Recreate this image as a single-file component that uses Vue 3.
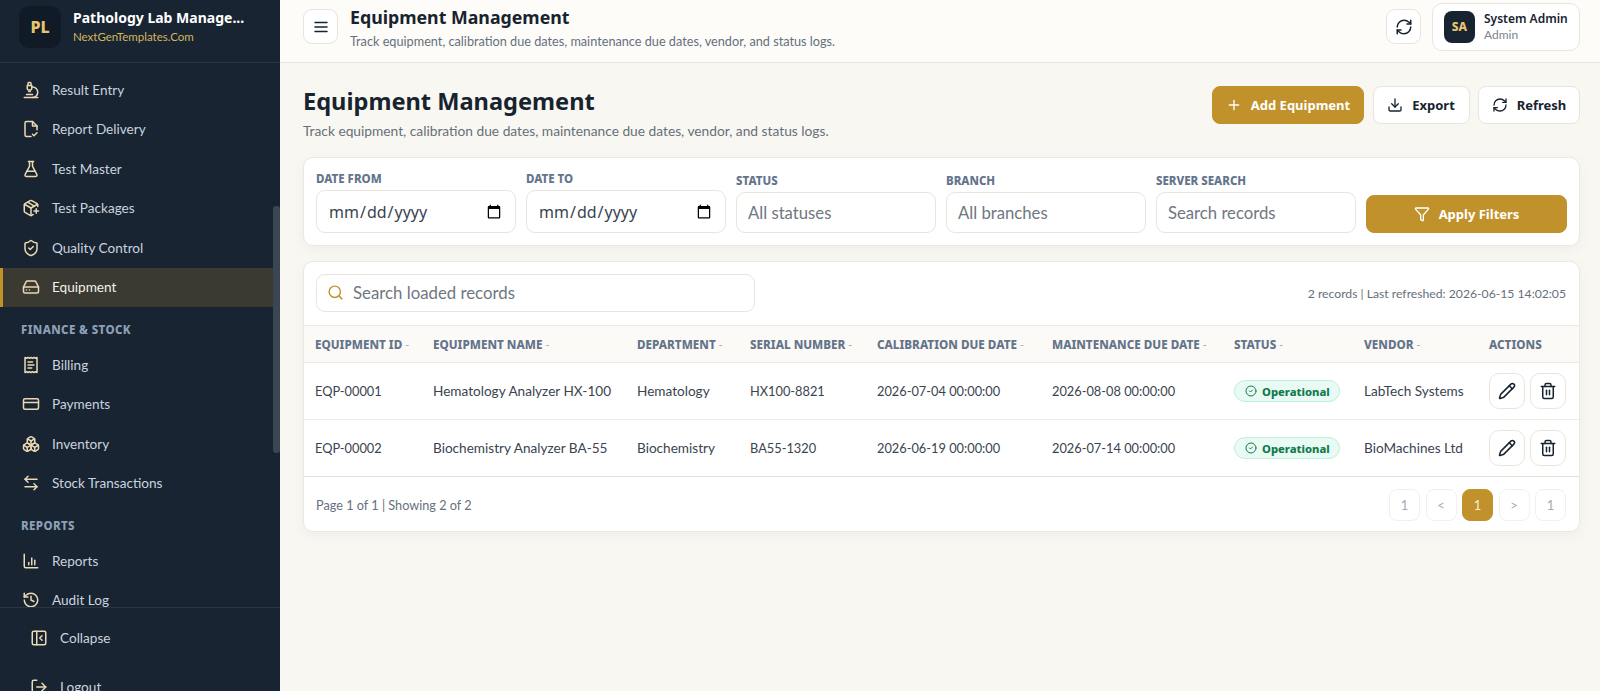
<script setup>
import { h } from 'vue'

const paths = {
  microscope: ['M6 18h8', 'M3 22h18', 'M14 22a7 7 0 1 0 0-14h-1', 'M9 14h2', 'M9 12a2 2 0 0 1-2-2V6h6v4a2 2 0 0 1-2 2Z', 'M12 6V3a1 1 0 0 0-1-1H9a1 1 0 0 0-1 1v3'],
  fileCheck: ['M12 22H6a2 2 0 0 1-2-2V4a2 2 0 0 1 2-2h8l6 6v5', 'M14 2v6h6', 'm14 19 2 2 4-4'],
  flask: ['M14 2v6a2 2 0 0 0 .245.96l5.51 10.08A2 2 0 0 1 18 22H6a2 2 0 0 1-1.755-2.96l5.51-10.08A2 2 0 0 0 10 8V2', 'M6.453 15h11.094', 'M8.5 2h7'],
  packagePlus: ['M16 16h6', 'M19 13v6', 'M21 10V8a2 2 0 0 0-1-1.73l-7-4a2 2 0 0 0-2 0l-7 4A2 2 0 0 0 3 8v8a2 2 0 0 0 1 1.73l7 4a2 2 0 0 0 2 0l2-1.14', 'm7.5 4.27 9 5.15', 'M3.29 7 12 12l8.71-5', 'M12 22V12'],
  shield: ['M20 13c0 5-3.5 7.5-7.66 8.95a1 1 0 0 1-.67-.01C7.5 20.5 4 18 4 13V6a1 1 0 0 1 1-1c2 0 4.5-1.2 6.24-2.72a1.17 1.17 0 0 1 1.52 0C14.51 3.81 17 5 19 5a1 1 0 0 1 1 1z', 'm9 12 2 2 4-4'],
  drive: ['M22 12H2', 'M5.45 5.11 2 12v6a2 2 0 0 0 2 2h16a2 2 0 0 0 2-2v-6l-3.45-6.89A2 2 0 0 0 16.76 4H7.24a2 2 0 0 0-1.79 1.11z', 'M6 16h.01', 'M10 16h.01'],
  receipt: ['M4 2v20l2-1 2 1 2-1 2 1 2-1 2 1 2-1 2 1V2l-2 1-2-1-2 1-2-1-2 1-2-1-2 1Z', 'M14 8H8', 'M16 12H8', 'M13 16H8'],
  card: ['M4 5h16a2 2 0 0 1 2 2v10a2 2 0 0 1-2 2H4a2 2 0 0 1-2-2V7a2 2 0 0 1 2-2Z', 'M2 10h20'],
  boxes: ['M2.97 12.92A2 2 0 0 0 2 14.63v3.24a2 2 0 0 0 .97 1.71l3 1.8a2 2 0 0 0 2.06 0L12 19v-5.5l-5-3-4.03 2.42Z', 'm7 16.5-4.74-2.85', 'm7 16.5 5-3', 'M7 16.5v5.17', 'M12 13.5V19l3.97 2.38a2 2 0 0 0 2.06 0l3-1.8a2 2 0 0 0 .97-1.71v-3.24a2 2 0 0 0-.97-1.71L17 10.5l-5 3Z', 'm17 16.5-5-3', 'm17 16.5 4.74-2.85', 'M17 16.5v5.17', 'M7.97 4.42A2 2 0 0 0 7 6.13v4.37l5 3 5-3V6.13a2 2 0 0 0-.97-1.71l-3-1.8a2 2 0 0 0-2.06 0l-3 1.8Z', 'M12 8 7.26 5.15', 'm12 8 4.74-2.85', 'M12 13.5V8'],
  transfer: ['M8 3 4 7l4 4', 'M4 7h16', 'm16 21 4-4-4-4', 'M20 17H4'],
  chart: ['M3 3v16a2 2 0 0 0 2 2h16', 'M9 17v-3', 'M13 17V8', 'M17 17v-6'],
  history: ['M3 12a9 9 0 1 0 9-9 9.75 9.75 0 0 0-6.74 2.74L3 8', 'M3 3v5h5', 'M12 7v5l4 2'],
  collapse: ['M5 3h14a2 2 0 0 1 2 2v14a2 2 0 0 1-2 2H5a2 2 0 0 1-2-2V5a2 2 0 0 1 2-2Z', 'M9 3v18', 'm16 15-3-3 3-3'],
  logout: ['M9 21H5a2 2 0 0 1-2-2V5a2 2 0 0 1 2-2h4', 'm16 17 5-5-5-5', 'M21 12H9'],
  menu: ['M4 6h16', 'M4 12h16', 'M4 18h16'],
  refresh: ['M3 12a9 9 0 0 1 9-9 9.75 9.75 0 0 1 6.74 2.74L21 8', 'M21 3v5h-5', 'M21 12a9 9 0 0 1-9 9 9.75 9.75 0 0 1-6.74-2.74L3 16', 'M8 16H3v5'],
  plus: ['M5 12h14', 'M12 5v14'],
  download: ['M12 15V3', 'M21 15v4a2 2 0 0 1-2 2H5a2 2 0 0 1-2-2v-4', 'm7 10 5 5 5-5'],
  funnel: ['M10 20a1 1 0 0 0 .553.895l2 1A1 1 0 0 0 14 21v-7a2 2 0 0 1 .517-1.341L21.74 4.67A1 1 0 0 0 21 3H3a1 1 0 0 0-.742 1.67l7.225 7.989A2 2 0 0 1 10 14z'],
  search: ['M19 11a8 8 0 1 1-16 0 8 8 0 0 1 16 0Z', 'm21 21-4.3-4.3'],
  check: ['M22 12a10 10 0 1 1-20 0 10 10 0 0 1 20 0Z', 'm9 12 2 2 4-4'],
  pencil: ['M21.174 6.812a1 1 0 0 0-3.986-3.987L3.842 16.174a2 2 0 0 0-.5.83l-1.321 4.352a.5.5 0 0 0 .623.622l4.353-1.32a2 2 0 0 0 .83-.497z', 'm15 5 4 4'],
  trash: ['M3 6h18', 'M19 6v14c0 1-1 2-2 2H7c-1 0-2-1-2-2V6', 'M8 6V4c0-1 1-2 2-2h4c1 0 2 1 2 2v2', 'M10 11v6', 'M14 11v6'],
}

const Icon = (props) =>
  h(
    'svg',
    {
      width: props.size,
      height: props.size,
      viewBox: '0 0 24 24',
      fill: 'none',
      stroke: 'currentColor',
      'stroke-width': 2,
      'stroke-linecap': 'round',
      'stroke-linejoin': 'round',
      style: { flex: 'none', display: 'block' },
    },
    paths[props.name].map((d) => h('path', { d })),
  )
Icon.props = { name: String, size: { type: Number, default: 18 } }

const navGroups = [
  {
    items: [
      { label: 'Result Entry', icon: 'microscope' },
      { label: 'Report Delivery', icon: 'fileCheck' },
      { label: 'Test Master', icon: 'flask' },
      { label: 'Test Packages', icon: 'packagePlus' },
      { label: 'Quality Control', icon: 'shield' },
      { label: 'Equipment', icon: 'drive', active: true },
    ],
  },
  {
    title: 'FINANCE & STOCK',
    items: [
      { label: 'Billing', icon: 'receipt' },
      { label: 'Payments', icon: 'card' },
      { label: 'Inventory', icon: 'boxes' },
      { label: 'Stock Transactions', icon: 'transfer' },
    ],
  },
  {
    title: 'REPORTS',
    items: [
      { label: 'Reports', icon: 'chart' },
      { label: 'Audit Log', icon: 'history' },
    ],
  },
]

const columns = [
  { label: 'EQUIPMENT ID', width: 118 },
  { label: 'EQUIPMENT NAME', width: 204 },
  { label: 'DEPARTMENT', width: 113 },
  { label: 'SERIAL NUMBER', width: 127 },
  { label: 'CALIBRATION DUE DATE', width: 175 },
  { label: 'MAINTENANCE DUE DATE', width: 182 },
  { label: 'STATUS', width: 130 },
  { label: 'VENDOR', width: 125 },
  { label: 'ACTIONS', width: 101, plain: true },
]

const numericCols = [0, 3, 4, 5]

const rows = [
  ['EQP-00001', 'Hematology Analyzer HX-100', 'Hematology', 'HX100-8821', '2026-07-04 00:00:00', '2026-08-08 00:00:00', 'LabTech Systems'],
  ['EQP-00002', 'Biochemistry Analyzer BA-55', 'Biochemistry', 'BA55-1320', '2026-06-19 00:00:00', '2026-07-14 00:00:00', 'BioMachines Ltd'],
]

const pages = [
  { label: '1' },
  { label: '<' },
  { label: '1', active: true },
  { label: '>' },
  { label: '1' },
]
</script>

<template>
  <div class="shell">
    <aside class="sidebar">
      <div class="brand">
        <div class="brand-logo">PL</div>
        <div class="brand-text">
          <div class="brand-name">Pathology Lab Manage...</div>
          <div class="brand-site">NextGenTemplates.Com</div>
        </div>
      </div>

      <div class="nav-wrap">
        <nav class="nav">
          <div v-for="(group, i) in navGroups" :key="i" class="nav-group">
            <div v-if="group.title" class="nav-title">{{ group.title }}</div>
            <a v-for="item in group.items" :key="item.label" class="nav-item" :class="{ active: item.active }">
              <Icon :name="item.icon" :size="18" />
              <span>{{ item.label }}</span>
            </a>
          </div>
        </nav>
        <div class="rail"><div class="thumb"></div></div>
      </div>

      <div class="side-foot">
        <a class="foot-item"><Icon name="collapse" :size="18" /><span>Collapse</span></a>
        <a class="foot-item"><Icon name="logout" :size="18" /><span>Logout</span></a>
      </div>
    </aside>

    <div class="main">
      <header class="topbar">
        <button class="icon-btn menu-btn"><Icon name="menu" :size="18" /></button>
        <div class="top-heading">
          <div class="top-title">Equipment Management</div>
          <div class="top-sub">Track equipment, calibration due dates, maintenance due dates, vendor, and status logs.</div>
        </div>
        <button class="icon-btn refresh-btn"><Icon name="refresh" :size="18" /></button>
        <div class="user">
          <div class="avatar">SA</div>
          <div>
            <div class="user-name">System Admin</div>
            <div class="user-role">Admin</div>
          </div>
        </div>
      </header>

      <main class="content">
        <div class="page-head">
          <div>
            <h1>Equipment Management</h1>
            <p>Track equipment, calibration due dates, maintenance due dates, vendor, and status logs.</p>
          </div>
          <div class="page-actions">
            <button class="btn gold add"><Icon name="plus" :size="16" />Add Equipment</button>
            <button class="btn export"><Icon name="download" :size="16" />Export</button>
            <button class="btn refresh"><Icon name="refresh" :size="16" />Refresh</button>
          </div>
        </div>

        <section class="card filters">
          <label class="field">
            <span>DATE FROM</span>
            <input class="control date" type="date" />
          </label>
          <label class="field">
            <span>DATE TO</span>
            <input class="control date" type="date" />
          </label>
          <label class="field">
            <span>STATUS</span>
            <input class="control" placeholder="All statuses" />
          </label>
          <label class="field">
            <span>BRANCH</span>
            <input class="control" placeholder="All branches" />
          </label>
          <label class="field">
            <span>SERVER SEARCH</span>
            <input class="control" placeholder="Search records" />
          </label>
          <button class="btn gold apply"><Icon name="funnel" :size="16" />Apply Filters</button>
        </section>

        <section class="card records">
          <div class="records-top">
            <div class="local-search">
              <Icon name="search" :size="17" />
              <input placeholder="Search loaded records" />
            </div>
            <div class="records-meta">2 records | Last refreshed: 2026-06-15 14:02:05</div>
          </div>

          <table>
            <colgroup>
              <col v-for="col in columns" :key="col.label" :style="{ width: col.width + 'px' }" />
            </colgroup>
            <thead>
              <tr>
                <th v-for="col in columns" :key="col.label">
                  {{ col.label }}<span v-if="!col.plain" class="sort"> -</span>
                </th>
              </tr>
            </thead>
            <tbody>
              <tr v-for="row in rows" :key="row[0]">
                <td v-for="n in 6" :key="n" :class="{ numeric: numericCols.includes(n - 1) }">{{ row[n - 1] }}</td>
                <td>
                  <span class="badge"><Icon name="check" :size="12" />Operational</span>
                </td>
                <td>{{ row[6] }}</td>
                <td>
                  <div class="row-actions">
                    <button class="act"><Icon name="pencil" :size="18" /></button>
                    <button class="act"><Icon name="trash" :size="18" /></button>
                  </div>
                </td>
              </tr>
            </tbody>
          </table>

          <div class="records-foot">
            <span>Page 1 of 1 | Showing 2 of 2</span>
            <div class="pager">
              <button v-for="(p, i) in pages" :key="i" class="page" :class="{ active: p.active }">{{ p.label }}</button>
            </div>
          </div>
        </section>
      </main>
    </div>
  </div>
</template>

<style>
html,
body {
  margin: 0;
  height: 100%;
  overflow: hidden;
}
</style>

<style scoped>
.shell {
  --heavy: 'Noto Sans', 'Liberation Sans', sans-serif;
  display: flex;
  height: 100vh;
  overflow: hidden;
  font-family: Lato, 'Noto Sans', sans-serif;
  color: #17232f;
  background: #f9f7f1;
}

.sidebar {
  width: 280px;
  flex: none;
  display: flex;
  flex-direction: column;
  background: #182431;
  color: #c9d3df;
  overflow: hidden;
}

.brand {
  height: 63px;
  flex: none;
  box-sizing: border-box;
  display: flex;
  align-items: center;
  gap: 12px;
  padding: 0 0 9px 19px;
  border-bottom: 1px solid #2a3643;
}

.brand-logo {
  width: 42px;
  height: 42px;
  border-radius: 10px;
  background: #101b27;
  color: #e6c66f;
  display: flex;
  align-items: center;
  justify-content: center;
  font-family: var(--heavy);
  font-weight: 800;
  font-size: 16px;
}

.brand-name {
  color: #fff;
  font-family: var(--heavy);
  font-weight: 700;
  font-size: 14px;
  line-height: 20px;
  white-space: nowrap;
}

.brand-site {
  color: #d4b65f;
  font-size: 11.5px;
  line-height: 17px;
}

.nav-wrap {
  height: 544px;
  flex: none;
  display: flex;
  overflow: hidden;
}

.nav {
  width: 273px;
  flex: none;
  padding-top: 7px;
}

.nav-title {
  padding: 0 21px;
  margin: 15px 0 7px;
  height: 16px;
  line-height: 16px;
  font-family: var(--heavy);
  font-size: 11.5px;
  font-weight: 800;
  letter-spacing: 0.4px;
  color: #8da0b6;
}

.nav-item {
  height: 39.5px;
  box-sizing: border-box;
  display: flex;
  align-items: center;
  gap: 12px;
  padding-left: 22px;
  font-size: 13.6px;
}

.nav-item svg {
  color: #ead9b2;
}

.nav-item.active {
  background: #3a3a33;
  color: #f4f1e8;
  box-shadow: inset 3px 0 0 #c1922b;
}

.rail {
  flex: 1;
}

.thumb {
  margin-top: 143px;
  height: 247px;
  background: #3b4653;
  border-radius: 3px;
}

.side-foot {
  flex: none;
  border-top: 1px solid #2a3643;
  padding-top: 20px;
}

.foot-item {
  height: 20px;
  display: flex;
  align-items: center;
  gap: 12px;
  padding-left: 30px;
  font-size: 13.6px;
}

.foot-item svg {
  color: #ead9b2;
}

.foot-item:first-child {
  margin-bottom: 29px;
}

.main {
  flex: 1;
  min-width: 0;
  display: flex;
  flex-direction: column;
}

.topbar {
  height: 63px;
  flex: none;
  box-sizing: border-box;
  display: flex;
  align-items: center;
  padding: 0 20px 9px 23px;
  background: #fdfcf9;
  border-bottom: 1px solid #e8e5dc;
}

.icon-btn {
  width: 35px;
  height: 35px;
  padding: 0;
  display: flex;
  align-items: center;
  justify-content: center;
  border: 1px solid #e8e5dc;
  border-radius: 9px;
  background: #fff;
  color: #17232f;
}

.top-heading {
  flex: 1;
  margin-left: 12px;
}

.top-title {
  font-family: var(--heavy);
  font-size: 17.75px;
  font-weight: 700;
  line-height: 24px;
  margin-top: 1px;
}

.top-sub {
  font-size: 12.7px;
  line-height: 18px;
  margin-top: 3px;
  color: #66707c;
}

.user {
  width: 148px;
  height: 48px;
  box-sizing: border-box;
  margin-left: 11px;
  display: flex;
  align-items: center;
  gap: 9px;
  padding-left: 11px;
  border: 1px solid #e8e5dc;
  border-radius: 10px;
  background: #fff;
}

.avatar {
  width: 31px;
  height: 32px;
  border-radius: 8px;
  background: #172331;
  color: #e6c66f;
  display: flex;
  align-items: center;
  justify-content: center;
  font-family: var(--heavy);
  font-size: 12px;
  font-weight: 800;
}

.user-name {
  font-family: var(--heavy);
  font-size: 12px;
  font-weight: 600;
  line-height: 16px;
}

.user-role {
  font-size: 12px;
  line-height: 16px;
  color: #7b838c;
}

.content {
  flex: 1;
  padding: 23px 20px 0 23px;
}

.page-head {
  display: flex;
  justify-content: space-between;
  align-items: flex-start;
}

h1 {
  margin: 0;
  font-family: var(--heavy);
  font-size: 23.6px;
  line-height: 30px;
  font-weight: 700;
}

.page-head p {
  margin: 5px 0 0;
  font-size: 13.75px;
  line-height: 20px;
  color: #66707c;
}

.page-actions {
  display: flex;
  gap: 8.5px;
}

.btn {
  height: 38px;
  box-sizing: border-box;
  display: flex;
  align-items: center;
  justify-content: center;
  gap: 9px;
  border-radius: 8px;
  border: 1px solid #e8e5dc;
  background: #fff;
  color: #17232f;
  font-family: var(--heavy);
  font-size: 13px;
  font-weight: 700;
  padding: 0;
}

.btn.gold {
  background: #c1922b;
  border-color: #c1922b;
  color: #fff;
}

.add {
  width: 152px;
}

.export {
  width: 97px;
}

.refresh {
  width: 102px;
}

.card {
  background: #fff;
  border: 1px solid #ebe8e0;
  border-radius: 10px;
  box-shadow: 0 4px 14px rgba(23, 35, 49, 0.04);
  box-sizing: border-box;
}

.filters {
  margin-top: 16px;
  height: 89px;
  padding: 0 12px 12px;
  display: grid;
  grid-template-columns: repeat(5, 200px) 1fr;
  column-gap: 10px;
  align-items: end;
}

.field {
  display: flex;
  flex-direction: column;
  gap: 3px;
}

.field span {
  font-family: var(--heavy);
  font-size: 11.5px;
  line-height: 16px;
  font-weight: 800;
  color: #64748b;
}

.control {
  height: 41px;
  width: 100%;
  box-sizing: border-box;
  padding: 0 11px;
  border: 1px solid #e8e5dc;
  border-radius: 9px;
  background: #fff;
  font-family: inherit;
  font-size: 16.7px;
  color: #3a444f;
  outline: none;
}

.control.date {
  height: 43px;
  font-family: var(--heavy);
  font-size: 16px;
}

.control::placeholder,
.local-search input::placeholder {
  color: #6f7781;
  opacity: 1;
}

.apply {
  height: 38px;
}

.records {
  margin-top: 15px;
  height: 271px;
  overflow: hidden;
}

.records-top {
  height: 63px;
  box-sizing: border-box;
  display: flex;
  align-items: center;
  justify-content: space-between;
  padding: 0 13px 2px 12px;
}

.local-search {
  width: 439px;
  height: 38px;
  box-sizing: border-box;
  display: flex;
  align-items: center;
  gap: 9px;
  padding: 0 10px;
  border: 1px solid #e8e5dc;
  border-radius: 9px;
  color: #c1922b;
}

.local-search input {
  flex: 1;
  min-width: 0;
  border: 0;
  outline: none;
  padding: 0;
  font-family: inherit;
  font-size: 16.8px;
  background: transparent;
}

.records-meta {
  font-size: 12.2px;
  color: #66707c;
  padding-top: 2px;
}

table {
  width: 100%;
  border-collapse: collapse;
  table-layout: fixed;
}

th {
  height: 36px;
  padding: 0 0 0 11px;
  text-align: left;
  font-family: var(--heavy);
  font-size: 11.7px;
  font-weight: 800;
  color: #64748b;
  background: #fbfaf6;
  border-top: 1px solid #ebe8e0;
  border-bottom: 1px solid #ebe8e0;
  white-space: nowrap;
}

.sort {
  color: #a9b2bd;
  font-weight: 400;
}

td {
  height: 56px;
  padding: 0 0 0 11px;
  font-size: 13.6px;
  color: #3a444f;
  border-bottom: 1px solid #efede6;
  white-space: nowrap;
}

td.numeric {
  font-size: 12.8px;
}

tbody tr:last-child td {
  border-bottom: 1px solid #e2dfd6;
}

.badge {
  display: inline-flex;
  align-items: center;
  gap: 5px;
  height: 22px;
  box-sizing: border-box;
  padding: 0 9px 0 10px;
  border: 1px solid #bfeeda;
  border-radius: 999px;
  background: #e8faf3;
  color: #0f7a4d;
  font-family: var(--heavy);
  font-size: 11.2px;
  font-weight: 800;
}

.row-actions {
  display: flex;
  gap: 5px;
}

.act {
  width: 36px;
  height: 36px;
  padding: 0;
  display: flex;
  align-items: center;
  justify-content: center;
  border: 1px solid #e8e5dc;
  border-radius: 10px;
  background: #fff;
  color: #17232f;
}

.records-foot {
  height: 55px;
  display: flex;
  align-items: center;
  justify-content: space-between;
  padding: 0 13px 0 12px;
  font-size: 12.7px;
  color: #66707c;
}

.pager {
  display: flex;
  gap: 5.5px;
}

.page {
  width: 31px;
  height: 32px;
  padding: 0;
  border: 1px solid #f2f0ea;
  border-radius: 8px;
  background: #fff;
  color: #a5abb3;
  font-family: inherit;
  font-size: 13px;
}

.page.active {
  background: #c1922b;
  border-color: #c1922b;
  color: #f5ecd4;
}
</style>
